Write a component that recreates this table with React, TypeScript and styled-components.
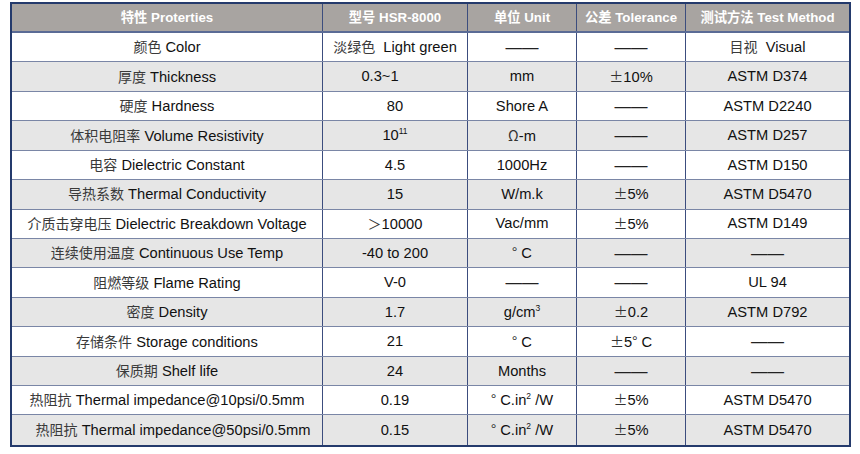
import React from "react";
import styled, { createGlobalStyle } from "styled-components";

const Global = createGlobalStyle`
  html, body { margin: 0; padding: 0; background: #ffffff; }
  body { font-family: "Liberation Sans", Arial, "Noto Sans CJK SC", sans-serif; }
`;

const Page = styled.div`
  padding: 2px 0 0 10px;
`;

const Table = styled.div`
  width: 837px;
  border: 2px solid #243a6c;
  display: grid;
  grid-template-rows: 29px repeat(14, 29.43px);
`;

const Row = styled.div<{ $shade?: "head" | "odd" | "even"; $last?: boolean }>`
  display: grid;
  grid-template-columns: 310px 145px 109px 109px 164px;
  background: ${(p) => (p.$shade === "head" ? "#a8a4a1" : p.$shade === "even" ? "#e6e6e6" : "#ffffff")};
  border-bottom: ${(p) =>
    p.$last ? "none" : p.$shade === "head" ? "2px solid #5a6b95" : "1px solid #7a86a6"};
  box-sizing: border-box;
`;

const Cell = styled.div<{ $first?: boolean; $shift?: number }>`
  display: flex;
  align-items: center;
  justify-content: center;
  border-left: ${(p) => (p.$first ? "none" : "1px solid #3c4d7e")};
  padding-left: ${(p) => (p.$shift ? `${p.$shift}px` : "0")};
  font-size: 14.7px;
  color: #111;
  white-space: nowrap;
  overflow: hidden;
`;

const Text = styled.span`
  line-height: 1;
`;

const HeadCell = styled(Cell)`
  color: #ffffff;
  font-size: 13.3px;
  font-weight: bold;
`;

const Zh = styled.span`
  font-family: "Noto Sans CJK SC", sans-serif;
  font-size: 14px;
  color: #3a3a3a;
  font-weight: 400;
`;

const HeadZh = styled.span`
  font-family: "Noto Sans CJK SC", sans-serif;
  font-weight: 700;
`;

const Sup = styled.sup`
  font-size: 8.5px;
  vertical-align: 6px;
  line-height: 0;
`;

const Sym = styled.span`
  font-family: "Noto Sans CJK SC", sans-serif;
  font-size: 14px;
  color: #333;
`;

const DashText = styled.span`
  font-family: "Liberation Sans", sans-serif;
  font-size: 16.5px;
  color: #222;
`;

const Dash = () => <DashText>——</DashText>;

type R = {
  zh: string;
  en: string;
  shift?: number;
  model: React.ReactNode;
  unit: React.ReactNode;
  tol: React.ReactNode;
  method: React.ReactNode;
};

const rows: R[] = [
  { zh: "颜色", en: "Color", model: <><Zh>淡绿色</Zh>&nbsp; Light green</>, unit: <Dash />, tol: <Dash />, method: <><Zh>目视</Zh>&nbsp; Visual</> },
  { zh: "厚度", en: "Thickness", model: <span style={{ marginRight: 30 }}>0.3~1</span>, unit: "mm", tol: <><Sym>±</Sym>10%</>, method: "ASTM D374" },
  { zh: "硬度", en: "Hardness", model: "80", unit: "Shore A", tol: <Dash />, method: "ASTM D2240" },
  { zh: "体积电阻率", en: "Volume Resistivity", model: <>10<Sup>11</Sup></>, unit: <><Sym>Ω</Sym>-m</>, tol: <Dash />, method: "ASTM D257" },
  { zh: "电容", en: "Dielectric Constant", model: "4.5", unit: "1000Hz", tol: <Dash />, method: "ASTM D150" },
  { zh: "导热系数", en: "Thermal Conductivity", model: "15", unit: "W/m.k", tol: <><Sym>±</Sym>5%</>, method: "ASTM D5470" },
  { zh: "介质击穿电压", en: "Dielectric Breakdown Voltage", model: <><Sym>＞</Sym>10000</>, unit: "Vac/mm", tol: <><Sym>±</Sym>5%</>, method: "ASTM D149" },
  { zh: "连续使用温度", en: "Continuous Use Temp", model: "-40 to 200", unit: <><Sym>°</Sym>&nbsp;C</>, tol: <Dash />, method: <Dash /> },
  { zh: "阻燃等级", en: "Flame Rating", model: "V-0", unit: <Dash />, tol: <Dash />, method: "UL 94" },
  { zh: "密度", en: "Density", model: "1.7", unit: <>g/cm<Sup>3</Sup></>, tol: <><Sym>±</Sym>0.2</>, method: "ASTM D792" },
  { zh: "存储条件", en: "Storage conditions", model: "21", unit: <><Sym>°</Sym>&nbsp;C</>, tol: <><Sym>±</Sym>5<Sym>°</Sym>&nbsp;C</>, method: <Dash /> },
  { zh: "保质期", en: "Shelf life", model: "24", unit: "Months", tol: <Dash />, method: <Dash /> },
  { zh: "热阻抗", en: "Thermal impedance@10psi/0.5mm", model: "0.19", unit: <><Sym>°</Sym>&nbsp;C.in<Sup>2</Sup>&nbsp;/W</>, tol: <><Sym>±</Sym>5%</>, method: "ASTM D5470" },
  { zh: "热阻抗", en: "Thermal impedance@50psi/0.5mm", shift: 12, model: "0.15", unit: <><Sym>°</Sym>&nbsp;C.in<Sup>2</Sup>&nbsp;/W</>, tol: <><Sym>±</Sym>5%</>, method: "ASTM D5470" },
];

const heads: [string, string][] = [
  ["特性", "Proterties"],
  ["型号", "HSR-8000"],
  ["单位", "Unit"],
  ["公差", "Tolerance"],
  ["测试方法", "Test Method"],
];

export default function App() {
  return (
    <>
      <Global />
      <Page>
        <Table>
          <Row $shade="head">
            {heads.map(([zh, en], i) => (
              <HeadCell key={en} $first={i === 0}>
                <Text>
                  <HeadZh>{zh}</HeadZh>&nbsp;{en}
                </Text>
              </HeadCell>
            ))}
          </Row>
          {rows.map((r, i) => (
            <Row key={i} $shade={i % 2 === 0 ? "odd" : "even"} $last={i === rows.length - 1}>
              <Cell $first $shift={r.shift}>
                <Text>
                  <Zh>{r.zh}</Zh>&nbsp;{r.en}
                </Text>
              </Cell>
              <Cell><Text>{r.model}</Text></Cell>
              <Cell><Text>{r.unit}</Text></Cell>
              <Cell><Text>{r.tol}</Text></Cell>
              <Cell><Text>{r.method}</Text></Cell>
            </Row>
          ))}
        </Table>
      </Page>
    </>
  );
}
